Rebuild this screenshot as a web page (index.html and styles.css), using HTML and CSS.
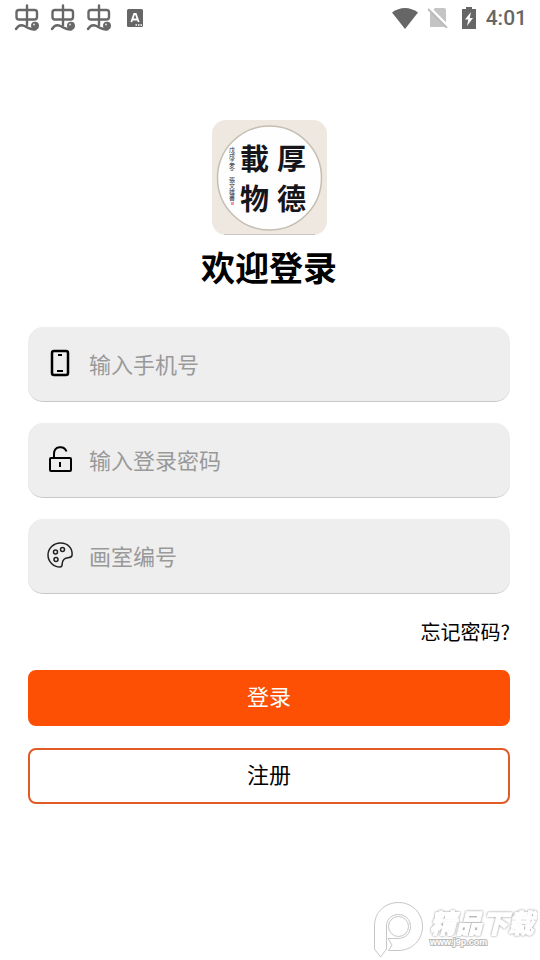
FILE: index.html
```html
<!DOCTYPE html>
<html lang="zh-CN">
<head>
<meta charset="utf-8">
<meta name="viewport" content="width=device-width, initial-scale=1">
<title>欢迎登录</title>
<link rel="stylesheet" href="styles.css">
</head>
<body>
<svg class="defs" aria-hidden="true">
  <symbol id="worm" viewBox="0 0 26 28">
    <g fill="none" stroke="#686868" stroke-width="2.4" stroke-linecap="round" stroke-linejoin="round">
      <rect x="2.500" y="6" width="20.500" height="9.500" rx="2.500"/>
      <path d="M13 1.500v19.500M2 25c2.500-4 5.500-4.500 8.500-3 4 2.200 7.500 4.500 11 3.300"/>
    </g>
    <circle cx="21" cy="21.800" r="4" fill="#686868"/>
    <circle cx="20" cy="20.500" r="1" fill="#ddd"/>
  </symbol>
</svg>

<header class="status">
  <div class="status-apps">
    <svg class="worm"><use href="#worm"/></svg>
    <svg class="worm"><use href="#worm"/></svg>
    <svg class="worm"><use href="#worm"/></svg>
    <svg class="ime" viewBox="0 0 16 18">
      <rect width="16" height="18" rx="1.500" fill="#666"/>
      <path d="M4.300 13 7.200 5h1.600l2.900 8M5.400 10.500h5.200" fill="none" stroke="#fff" stroke-width="1.800"/>
      <path d="M8.500 16h1.500M11 16h1.500M13.500 16H15" stroke="#fff" stroke-width="1.300"/>
    </svg>
  </div>
  <div class="status-system">
    <svg class="wifi" viewBox="0 0 26 21"><path d="M0 4.500C8-1.500 18-1.500 26 4.500L13 21Z" fill="#666"/></svg>
    <svg class="sim" viewBox="0 0 20 20">
      <path d="M7 0h9q2 0 2 2v17H2V5Z" fill="#c4c4c4"/>
      <path d="M1 -1 21 19" stroke="#fff" stroke-width="2.500"/>
      <path d="M0 1 19 20" stroke="#bbb" stroke-width="1.800"/>
    </svg>
    <svg class="battery" viewBox="0 0 14 22">
      <path d="M4 0h6v2h4v20H0V2h4Z" fill="#666"/>
      <path d="M9 5 3 12.500h3.300L5 19l6-8H7.700Z" fill="#fff"/>
    </svg>
    <time class="clock">4:01</time>
  </div>
</header>

<main class="page">
  <svg class="logo" viewBox="0 0 115 115" role="img" aria-label="厚德載物">
    <rect width="115" height="115" rx="14" fill="#efe8e1"/>
    <circle cx="57.500" cy="58" r="52" fill="#fefefe" stroke="#c5beb2" stroke-width="1.500"/>
    <path d="M12 114.500h91" stroke="#c9c3cc"/>
    <g class="brush">
      <text x="28" y="50">載</text>
      <text x="65" y="50">厚</text>
      <text x="28" y="90">物</text>
      <text x="65" y="90">德</text>
    </g>
    <text class="inscription" x="20" y="27">戊戌孟冬　張文雄書</text>
    <rect x="19" y="82" width="3" height="3" fill="#f09a94"/>
  </svg>
  <h1 class="title">欢迎登录</h1>

  <form class="form">
    <div class="fields">
      <label class="field">
        <svg class="icon" viewBox="0 0 28 28" fill="none" stroke="#000">
          <rect x="6" y="2" width="16" height="24" rx="2" stroke-width="2.500"/>
          <path d="M12 6h4M11 22h6" stroke-width="2"/>
        </svg>
        <input class="input" type="tel" placeholder="输入手机号" aria-label="手机号">
      </label>
      <label class="field">
        <svg class="icon" viewBox="0 0 28 28" fill="none" stroke="#000">
          <rect x="4" y="13" width="21" height="13" rx="1" stroke-width="2"/>
          <path d="M8 12V9c0-8 10-9 12.500-2.500" stroke-width="2"/>
          <path d="M14 17v5" stroke-width="2"/>
        </svg>
        <input class="input" type="password" placeholder="输入登录密码" aria-label="登录密码">
      </label>
      <label class="field">
        <svg class="icon" viewBox="0 0 28 28" fill="none" stroke="#222" stroke-width="1.500">
          <path d="M26 14.500C27 7 21.500 2 14.500 2S2 7.500 2 14 7.500 26 14 26c2.500 0 2-2 2.300-4 .5-3.500 2-5 5.700-5.300 2.300-.2 3.700-.5 4-2.200Z"/>
          <circle cx="9.500" cy="11" r="2"/>
          <circle cx="16.500" cy="8.500" r="2"/>
          <circle cx="10" cy="18.500" r="2"/>
        </svg>
        <input class="input" type="text" placeholder="画室编号" aria-label="画室编号">
      </label>
    </div>
    <a class="forgot" href="#">忘记密码?</a>
    <div class="actions">
      <button class="button primary" type="submit">登录</button>
      <button class="button" type="button">注册</button>
    </div>
  </form>
</main>

<footer class="footer">
  <svg class="watermark" viewBox="0 0 166 58" role="img" aria-label="精品下载 www.j9p.com">
    <g fill="#fff" stroke="#c6c6c6">
      <path d="M2.500 48V25C2.500 11 13 1.500 26.500 1.500S50.500 12 50.500 25.500 40 49.500 26 49.500H16.500L20 44l-4-6.500h10c7 0 12.500-5 12.500-12S33 13.500 26.500 13.500 14.500 18 14.500 25V48L8.500 56Z"/>
      <circle cx="26.500" cy="25.500" r="10"/>
    </g>
    <text class="mark-name" x="58" y="32">精品下载</text>
    <text class="mark-url" x="58" y="44">www.j9p.com</text>
  </svg>
</footer>
</body>
</html>
```

FILE: styles.css
```css
* {
  box-sizing: border-box;
}

body {
  margin: 0;
  min-height: 100vh;
  display: flex;
  flex-direction: column;
  background: #fff;
  color: #000;
  font-family: "Noto Sans CJK SC", sans-serif;
}

.defs {
  display: none;
}

.status {
  display: flex;
  justify-content: space-between;
  align-items: center;
  height: 36px;
  padding: 0 13px 0 14px;
}

.status-apps,
.status-system {
  display: flex;
  align-items: center;
  gap: 10px;
}

.worm {
  width: 26px;
  height: 28px;
}

.ime {
  width: 16px;
  height: 18px;
  margin-left: 5px;
}

.wifi {
  width: 26px;
  height: 21px;
}

.sim {
  width: 20px;
  height: 20px;
}

.battery {
  width: 14px;
  height: 22px;
  margin-left: 4px;
}

.clock {
  color: #666;
  font: 500 21px/36px Roboto, sans-serif;
}

.page {
  display: flex;
  flex-direction: column;
  align-items: center;
  padding: 84px 30px 0 28px;
}

.logo {
  width: 115px;
  height: 115px;
}

.brush {
  font: 700 29px "Noto Sans CJK TC", serif;
  fill: #15151a;
}

.inscription {
  font: 6px "Noto Sans CJK TC", serif;
  fill: #333;
  writing-mode: vertical-rl;
}

.title {
  margin: 7px 0 35px;
  font-size: 34px;
  font-weight: 700;
  line-height: 50px;
}

.form,
.fields,
.actions {
  display: flex;
  flex-direction: column;
  width: 100%;
}

.form {
  gap: 22px;
}

.fields {
  gap: 21px;
}

.actions {
  gap: 22px;
}

.field {
  display: flex;
  align-items: center;
  gap: 15px;
  height: 75px;
  padding: 0 18px 2px;
  border-bottom: 1px solid #c8c8c8;
  border-radius: 15px;
  background: #eee;
}

.icon {
  flex: none;
  width: 28px;
  height: 28px;
}

.input {
  flex: 1;
  min-width: 0;
  padding: 0;
  border: 0;
  outline: 0;
  background: transparent;
  color: #000;
  font: 22px/32px "Noto Sans CJK SC", sans-serif;
}

.input::placeholder {
  color: #999;
  opacity: 1;
}

.forgot {
  align-self: flex-end;
  color: #000;
  font-size: 20px;
  line-height: 32px;
  text-decoration: none;
}

.button {
  height: 56px;
  padding: 0 0 6px;
  border: 2px solid #e25a26;
  border-radius: 8px;
  background: #fff;
  color: #000;
  font: 22px/32px "Noto Sans CJK SC", sans-serif;
}

.primary {
  border-color: #fd5005;
  background: #fd5005;
  color: #fff;
}

.footer {
  display: flex;
  justify-content: flex-end;
  margin-top: auto;
  padding: 0 2px 1px 0;
}

.watermark {
  width: 166px;
  height: 58px;
}

.mark-name {
  font: italic 900 26px "Noto Sans CJK SC", sans-serif;
  fill: #fff;
  stroke: #fff;
  stroke-width: 1;
  filter: drop-shadow(0 0 1px #888);
}

.mark-url {
  font: 700 9px "Liberation Sans", sans-serif;
  fill: #fff;
  stroke: #bbb;
  stroke-width: 2;
  paint-order: stroke;
}
```
